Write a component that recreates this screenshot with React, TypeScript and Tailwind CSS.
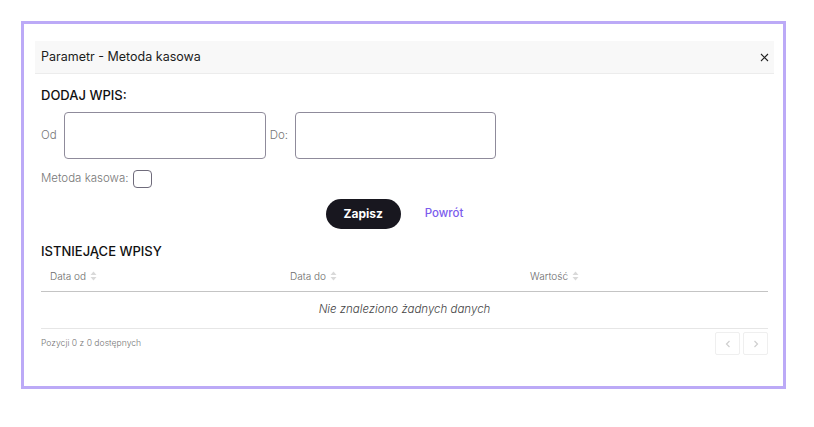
import React from "react";

function SortIcon() {
  return (
    <svg width="7" height="10" viewBox="0 0 7 10" className="ml-[4px] inline-block">
      <path d="M3.5 0.5 L6.5 4 L0.5 4 Z" fill="#d9d9d9" />
      <path d="M3.5 9.5 L6.5 6 L0.5 6 Z" fill="#d9d9d9" />
    </svg>
  );
}

export default function App() {
  return (
    <div
      className="bg-white p-[21px] w-[814px] h-[427px]"
      style={{ fontFamily: "Inter, 'Noto Sans', sans-serif" }}
    >
      <div className="w-[765px] h-[368px] border-[3px] border-[#bcaaf7] bg-white pl-[11px] pr-[9px] pt-[17px]">
        <div className="h-[33px] bg-[#f8f8f8] border-b border-[#ececec] flex items-center justify-between pl-[6px] pr-[5px]">
          <span className="text-[12.5px] text-[#1c1c1c]">Parametr - Metoda kasowa</span>
          <svg width="9" height="9" viewBox="0 0 9 9">
            <path d="M1 1 L8 8 M8 1 L1 8" stroke="#222" strokeWidth="1.1" />
          </svg>
        </div>
        <div className="px-[6px]">
          <div className="mt-[13px] h-[16px] leading-[16px] text-[13px] font-medium text-[#111]">DODAJ WPIS:</div>
          <div className="mt-[9px] flex items-center">
            <span className="text-[11.5px] font-light text-[#777] mr-[7px]">Od</span>
            <div className="w-[202px] h-[47px] rounded-[4px] border border-[#8f8b9b]" />
            <span className="text-[11.5px] font-light text-[#777] ml-[4px] mr-[7px]">Do:</span>
            <div className="w-[201px] h-[47px] rounded-[4px] border border-[#8f8b9b]" />
          </div>
          <div className="mt-[11px] flex items-center h-[18px]">
            <span className="text-[11.5px] font-light text-[#777] mr-[4px]">Metoda kasowa:</span>
            <div className="w-[19px] h-[18px] rounded-[4px] border border-[#6f6b7b]" />
          </div>
          <div className="mt-[11px] flex items-center justify-center gap-[12px] pr-[8px]">
            <button className="w-[75px] h-[30px] rounded-full bg-[#18171f] text-white text-[12px] font-bold">Zapisz</button>
            <button className="h-[30px] px-[12px] text-[11.5px] font-medium text-[#7b5ced]">Powrót</button>
          </div>
          <div className="mt-[14px] h-[16px] leading-[16px] text-[13px] font-medium text-[#111]">ISTNIEJĄCE WPISY</div>
          <div className="grid grid-cols-[240px_240px_1fr] h-[33px] items-center border-b border-[#c4c4c4] text-[10px] font-light text-[#6b6b6b]">
            <div className="pl-[9px] pt-[2px] flex items-center">Data od<SortIcon /></div>
            <div className="pl-[9px] pt-[2px] flex items-center">Data do<SortIcon /></div>
            <div className="pl-[9px] pt-[2px] flex items-center">Wartość<SortIcon /></div>
          </div>
          <div className="h-[37px] flex items-center justify-center border-b border-[#e6e6e6] text-[11.5px] italic font-light text-[#444]">
            Nie znaleziono żadnych danych
          </div>
          <div className="mt-[3px] flex items-center justify-between">
            <span className="text-[8.6px] font-light text-[#777]">Pozycji 0 z 0 dostępnych</span>
            <div className="flex gap-[3px]">
              <div className="w-[25px] h-[23px] border border-[#efefef] rounded-[2px] flex items-center justify-center">
                <svg width="6" height="8" viewBox="0 0 6 8"><path d="M4.5 1 L1.5 4 L4.5 7" stroke="#cfcfcf" strokeWidth="1.2" fill="none" /></svg>
              </div>
              <div className="w-[25px] h-[23px] border border-[#efefef] rounded-[2px] flex items-center justify-center">
                <svg width="6" height="8" viewBox="0 0 6 8"><path d="M1.5 1 L4.5 4 L1.5 7" stroke="#cfcfcf" strokeWidth="1.2" fill="none" /></svg>
              </div>
            </div>
          </div>
        </div>
      </div>
    </div>
  );
}
